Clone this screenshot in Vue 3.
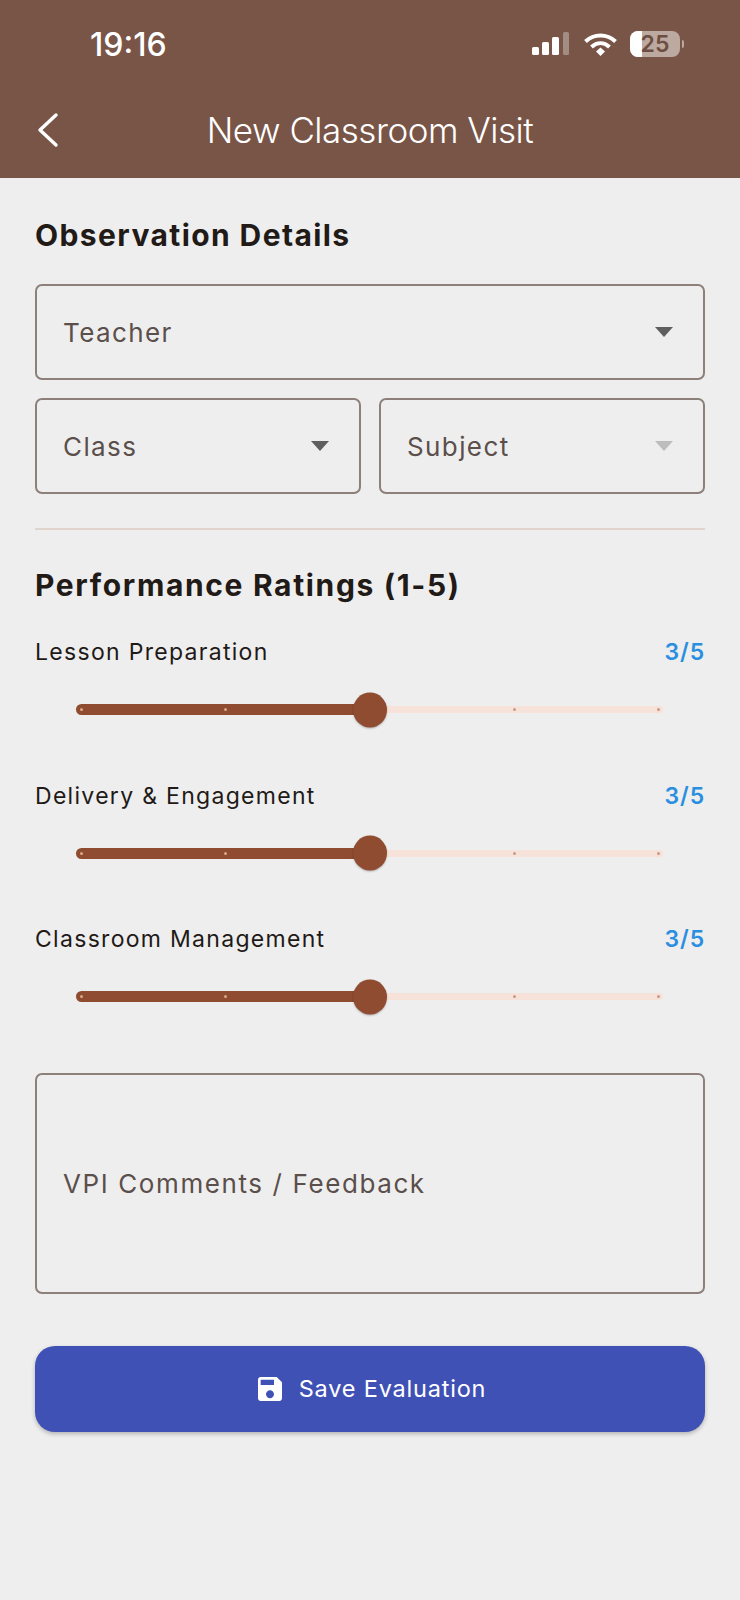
<template>
  <div class="screen">
    <header class="appbar">
      <div class="status">
        <span class="time">19:16</span>
        <div class="status-icons">
          <svg width="37" height="24" viewBox="0 0 37 24">
            <rect x="0" y="15" width="7" height="8" rx="1.500" fill="#fff" />
            <rect x="10" y="10" width="7" height="13" rx="1.500" fill="#fff" />
            <rect x="20" y="5" width="7" height="18" rx="1.500" fill="#fff" />
            <rect x="31" y="0" width="6" height="23" rx="1.500" fill="#a38d83" />
          </svg>
          <svg class="wifi" width="35" height="24" viewBox="0.500 0 33 24" fill="none" stroke="#fff" stroke-width="4">
            <path d="M2 9.500C10.500 1.500 23.500 1.500 32 9.500" />
            <path d="M8 15C13.500 10 20.500 10 26 15" />
            <path d="M12.500 19.500L17 15.500L21.500 19.500L17 24Z" fill="#fff" stroke="none" />
          </svg>
          <div class="battery">
            <div class="battery-body">
              <span class="battery-level"></span>
              <span class="battery-num">25</span>
            </div>
            <span class="battery-cap"></span>
          </div>
        </div>
      </div>
      <div class="titlebar">
        <svg class="back" width="24" height="36" viewBox="0 0 24 36" fill="none" stroke="#fff" stroke-width="3.400" stroke-linecap="round" stroke-linejoin="round">
          <path d="M20 3L4 18L20 33" />
        </svg>
        <h1>New Classroom Visit</h1>
      </div>
    </header>

    <main class="content">
      <h2>Observation Details</h2>
      <div class="field">
        <span>Teacher</span>
        <i class="caret"></i>
      </div>
      <div class="field-row">
        <div class="field">
          <span>Class</span>
          <i class="caret"></i>
        </div>
        <div class="field">
          <span>Subject</span>
          <i class="caret disabled"></i>
        </div>
      </div>
      <div class="divider"></div>

      <h2 class="ratings-title">Performance Ratings (1-5)</h2>
      <section v-for="r in ratings" :key="r.label" class="rating">
        <div class="rating-head">
          <span class="rating-label">{{ r.label }}</span>
          <span class="rating-value">{{ r.value }}/5</span>
        </div>
        <div class="slider">
          <div class="track">
            <div class="track-on" :style="{ width: 'calc(' + (r.value - 1) * 25 + '% + 4px)' }"></div>
            <div class="ticks">
              <i v-for="n in 5" :key="n" :class="{ on: n <= r.value }"></i>
            </div>
            <div class="thumb" :style="{ left: (r.value - 1) * 25 + '%' }"></div>
          </div>
        </div>
      </section>

      <div class="comments">VPI Comments / Feedback</div>

      <button class="save">
        <svg width="32" height="32" viewBox="0 0 24 24" fill="#fff">
          <path d="M17 3H5c-1.110 0-2 .9-2 2v14c0 1.100.89 2 2 2h14c1.100 0 2-.9 2-2V7l-4-4zm-5 16c-1.660 0-3-1.340-3-3s1.340-3 3-3 3 1.340 3 3-1.340 3-3 3zm3-10H5V5h10v4z" />
        </svg>
        <span>Save Evaluation</span>
      </button>
    </main>
  </div>
</template>

<script setup>
const ratings = [
  { label: 'Lesson Preparation', value: 3 },
  { label: 'Delivery & Engagement', value: 3 },
  { label: 'Classroom Management', value: 3 },
];
</script>

<style>
body {
  margin: 0;
  background: #eeeeee;
}
</style>

<style scoped>
.screen {
  width: 740px;
  height: 1600px;
  overflow: hidden;
  background: #eeeeee;
  font-family: Inter, "Liberation Sans", sans-serif;
}

.appbar {
  height: 178px;
  background: #795548;
  color: #fff;
  box-sizing: border-box;
}

.status {
  display: flex;
  align-items: center;
  justify-content: space-between;
  height: 88px;
  padding: 0 56px 0 90px;
}

.time {
  font-size: 32px;
  font-weight: 500;
  letter-spacing: 0;
}

.status-icons {
  display: flex;
  align-items: center;
  gap: 12px;
}

.wifi {
  margin-left: 2px;
}

.battery {
  display: flex;
  align-items: center;
  gap: 2px;
}

.battery-body {
  position: relative;
  width: 50px;
  height: 26px;
  border-radius: 8px;
  overflow: hidden;
  background: #bca99f;
  display: flex;
  align-items: center;
  justify-content: center;
}

.battery-level {
  position: absolute;
  left: 0;
  top: 0;
  bottom: 0;
  width: 12px;
  background: #fff;
}

.battery-num {
  position: relative;
  font-size: 23px;
  font-weight: 600;
  color: #6e4e42;
}

.battery-cap {
  width: 2px;
  height: 8px;
  border-radius: 0 2px 2px 0;
  background: #bca99f;
}

.titlebar {
  position: relative;
  display: flex;
  align-items: center;
  justify-content: center;
  height: 84px;
}

.back {
  position: absolute;
  left: 36px;
  top: 24px;
}

h1 {
  margin: 0;
  font-size: 35px;
  font-weight: 300;
  letter-spacing: -0.500px;
}

.content {
  display: flex;
  flex-direction: column;
  padding: 0 35px;
}

h2 {
  margin: 38px 0 30px;
  font-size: 30px;
  line-height: 38px;
  font-weight: 700;
  color: #221a16;
  letter-spacing: 1.400px;
}

.field {
  display: flex;
  align-items: center;
  justify-content: space-between;
  box-sizing: border-box;
  height: 96px;
  padding: 0 30px 0 26px;
  border: 2px solid #8d7f79;
  border-radius: 7px;
  font-size: 26px;
  color: #5b4f4b;
  letter-spacing: 1.400px;
}

.field-row {
  display: flex;
  gap: 18px;
  margin-top: 18px;
}

.field-row .field {
  flex: 1;
}

.caret {
  width: 0;
  height: 0;
  border-left: 9px solid transparent;
  border-right: 9px solid transparent;
  border-top: 10px solid #5f5f5f;
}

.caret.disabled {
  border-top-color: #bdbdbd;
}

.divider {
  height: 2px;
  margin-top: 34px;
  background: #e0d4cc;
}

.ratings-title {
  margin: 36px 0 32px;
  letter-spacing: 1.650px;
}

.rating {
  height: 143.500px;
}

.rating-head {
  display: flex;
  justify-content: space-between;
  align-items: center;
  height: 32px;
  font-size: 23px;
  letter-spacing: 1.300px;
}

.rating-label {
  color: #1f1a18;
}

.rating-value {
  color: #2a8fe0;
  font-weight: 600;
  letter-spacing: 0.900px;
}

.slider {
  padding: 0 45px;
  margin-top: 38px;
}

.track {
  position: relative;
  height: 7px;
  border-radius: 4px;
  background: #f6e2d8;
  box-shadow: 3px 0 0 #f6e2d8;
}

.track-on {
  position: absolute;
  left: -4px;
  top: -2px;
  height: 11px;
  border-radius: 6px;
  background: #8f4c30;
}

.ticks {
  position: absolute;
  inset: 0;
  display: flex;
  align-items: center;
  justify-content: space-between;
}

.ticks i {
  width: 3px;
  height: 3px;
  border-radius: 50%;
  background: #c79a85;
}

.ticks i.on {
  background: #d9a78e;
}

.thumb {
  position: absolute;
  top: 50%;
  width: 34px;
  height: 35px;
  border-radius: 50%;
  background: #8f4c30;
  transform: translate(-50%, -50%);
  box-shadow: 0 1px 2px rgba(0, 0, 0, 0.25);
}

.comments {
  display: flex;
  align-items: center;
  box-sizing: border-box;
  height: 221px;
  margin-top: 6px;
  padding: 0 26px;
  border: 2px solid #8d7f79;
  border-radius: 7px;
  font-size: 26px;
  color: #5b4f4b;
  letter-spacing: 1.600px;
}

.save {
  display: flex;
  align-items: center;
  justify-content: center;
  gap: 13px;
  height: 86px;
  margin-top: 52px;
  border: none;
  border-radius: 20px;
  background: #3f51b5;
  color: #fff;
  font-family: inherit;
  font-size: 23.500px;
  font-weight: 400;
  letter-spacing: 0.800px;
  box-shadow: 0 2px 4px rgba(0, 0, 0, 0.25);
}
</style>
